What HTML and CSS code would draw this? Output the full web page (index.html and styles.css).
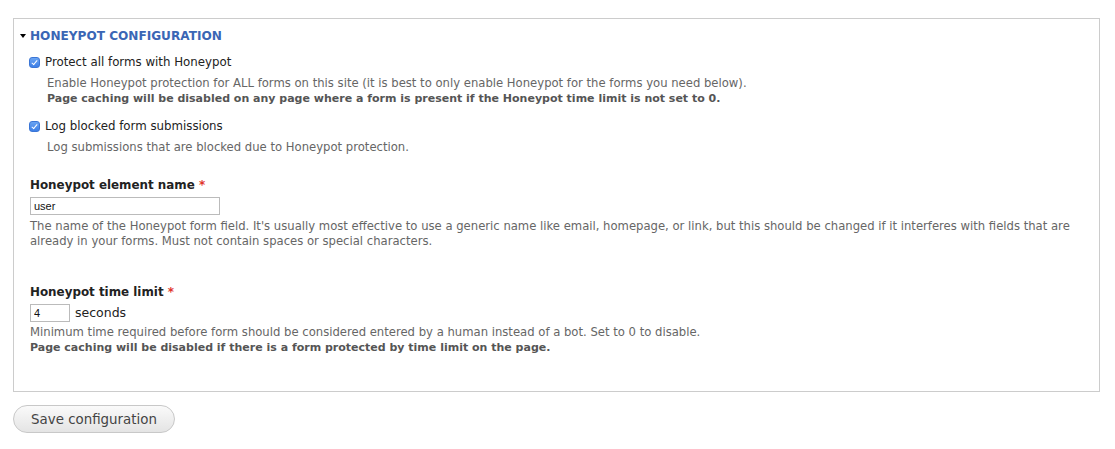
FILE: index.html
```html
<!DOCTYPE html>
<html>
<head>
<meta charset="utf-8">
<link rel="stylesheet" href="styles.css">
</head>
<body>
<div class="page">
  <div class="fieldset">
    <div class="legend"><span class="caret"></span>HONEYPOT CONFIGURATION</div>
    <div class="item">
      <label class="check"><input type="checkbox" checked><span>Protect all forms with Honeypot</span></label>
      <div class="desc indent">Enable Honeypot protection for ALL forms on this site (it is best to only enable Honeypot for the forms you need below).<br><strong>Page caching will be disabled on any page where a form is present if the Honeypot time limit is not set to 0.</strong></div>
    </div>
    <div class="item">
      <label class="check"><input type="checkbox" checked><span>Log blocked form submissions</span></label>
      <div class="desc indent">Log submissions that are blocked due to Honeypot protection.</div>
    </div>
    <div class="field first">
      <label class="flabel">Honeypot element name <span class="req">*</span></label>
      <input class="text wide" type="text" value="user">
      <div class="desc">The name of the Honeypot form field. It's usually most effective to use a generic name like email, homepage, or link, but this should be changed if it interferes with fields that are<br>already in your forms. Must not contain spaces or special characters.</div>
    </div>
    <div class="field second">
      <label class="flabel">Honeypot time limit <span class="req">*</span></label>
      <div class="inline"><input class="text short" type="text" value="4"><span class="suffix">seconds</span></div>
      <div class="desc">Minimum time required before form should be considered entered by a human instead of a bot. Set to 0 to disable.<br><strong>Page caching will be disabled if there is a form protected by time limit on the page.</strong></div>
    </div>
  </div>
  <div class="actions"><button class="btn" type="button">Save configuration</button></div>
</div>
</body>
</html>
```
FILE: styles.css
```css
html, body { margin: 0; padding: 0; background: #fff; }
body { font-family: "DejaVu Sans", Verdana, sans-serif; color: #333; }
.page { padding: 18px 15px 0 13px; }
.fieldset {
  border: 1px solid #ccc;
  padding: 9px 16px 36px 16px;
}
.legend {
  display: flex;
  align-items: center;
  font-size: 12.1px;
  font-weight: bold;
  color: #3a66b5;
  line-height: 16px;
  margin-left: -10px;
}
.caret {
  width: 0; height: 0;
  border-left: 3.5px solid transparent;
  border-right: 3.5px solid transparent;
  border-top: 4px solid #000;
  margin-right: 4px;
}
.item { margin-top: 10px; }
.item + .item { margin-top: 12px; }
.check { display: flex; align-items: center; font-size: 11.8px; line-height: 16px; color: #222; }
.check input {
  appearance: none;
  -webkit-appearance: none;
  width: 11px; height: 11px;
  margin: 1px 5px 0 -1px;
  border-radius: 3px;
  background: linear-gradient(#6aa4f2, #3d7fe6);
  border: 1px solid #3b76d6;
  position: relative;
  box-sizing: border-box;
}
.check input::after {
  content: "";
  position: absolute;
  left: 3px; top: 1px;
  width: 2px; height: 5px;
  border: solid #fff;
  border-width: 0 1.5px 1.5px 0;
  transform: rotate(40deg);
}
.desc {
  font-size: 11.63px;
  line-height: 15px;
  color: #666;
}
.desc strong { color: #555; font-size: 11px; }
.indent { margin-left: 17px; margin-top: 6px; }
.field.first { margin-top: 22px; }
.field.second { margin-top: 35px; }
.flabel { display: block; font-size: 11.9px; font-weight: bold; color: #222; line-height: 16px; margin-bottom: 4px; }
.req { color: #e0352b; }
.text {
  font-family: "Liberation Sans", Arial, sans-serif;
  font-size: 11px;
  height: 18px;
  box-sizing: border-box;
  border: 1px solid #bbb;
  padding: 1px 3px;
  color: #111;
  margin: 0;
}
.wide { width: 190px; display: block; }
.short { width: 40px; }
.inline { display: flex; align-items: center; height: 18px; }
.suffix { font-size: 12.5px; line-height: 16px; margin-left: 5px; color: #222; }
.field .desc { margin-top: 4px; }
.field.second .desc { margin-top: 3px; }
.actions { padding-top: 13px; }
.btn {
  font-family: "DejaVu Sans", Verdana, sans-serif;
  font-size: 13.4px;
  color: #444;
  height: 28px;
  width: 162px;
  border: 1px solid #c8c8c8;
  border-radius: 14px;
  background: linear-gradient(#fafafa, #e4e4e4);
  padding: 0;
}
```
